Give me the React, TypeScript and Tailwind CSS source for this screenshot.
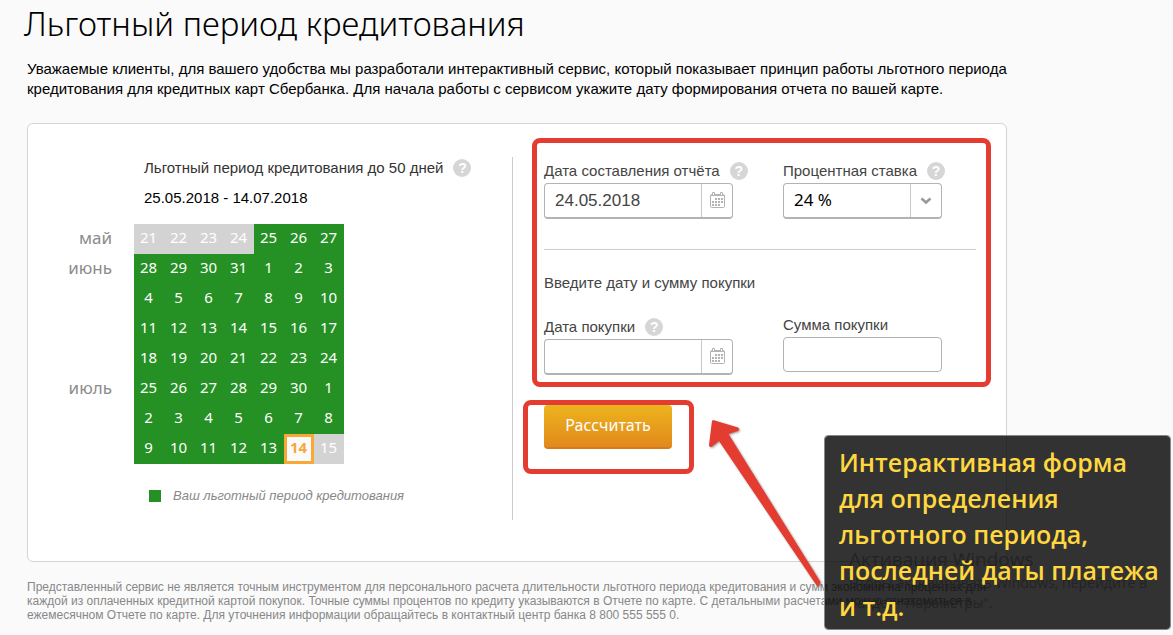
import type { ReactNode } from "react";
import { useState } from "react";
import clsx from "clsx";

type DayState = "off" | "grace" | "due";

interface Week {
  month?: string;
  days: number[];
}

const WEEKS: Week[] = [
  { month: "май", days: [21, 22, 23, 24, 25, 26, 27] },
  { month: "июнь", days: [28, 29, 30, 31, 1, 2, 3] },
  { days: [4, 5, 6, 7, 8, 9, 10] },
  { days: [11, 12, 13, 14, 15, 16, 17] },
  { days: [18, 19, 20, 21, 22, 23, 24] },
  { month: "июль", days: [25, 26, 27, 28, 29, 30, 1] },
  { days: [2, 3, 4, 5, 6, 7, 8] },
  { days: [9, 10, 11, 12, 13, 14, 15] },
];

// the grace period covers cells 4..54, the last one is the payment date
const GRACE_START = 4;
const DUE_CELL = 54;

const dayState = (cell: number): DayState => {
  if (cell === DUE_CELL) {
    return "due";
  }
  return cell < GRACE_START || cell > DUE_CELL ? "off" : "grace";
};

const HelpButton = ({ label }: { label: string }) => (
  <button
    type="button"
    aria-label={label}
    className="flex size-[18px] shrink-0 items-center justify-center rounded-full bg-[#d6d6d6] text-sm leading-none font-bold text-white"
  >
    ?
  </button>
);

const CalendarIcon = () => (
  <svg width="15" height="16" viewBox="0 0 15 16" fill="none" aria-hidden="true">
    <rect x="0.5" y="2.5" width="14" height="13" rx="1" stroke="#b3b3b3" />
    <path d="M1 3.500h13" stroke="#b3b3b3" />
    <path d="M2.5 0.5h2v3h-2zM10.500 0.5h2v3h-2z" fill="#fff" stroke="#b3b3b3" />
    <path d="M5 7h8M2 10h11M2 13h8" stroke="#b3b3b3" strokeWidth="2" strokeDasharray="2 1" />
  </svg>
);

const ChevronIcon = () => (
  <svg width="12" height="8" viewBox="0 0 12 8" fill="none" aria-hidden="true">
    <path d="M1.5 1.5L6 5.5l4.5-4" stroke="#999" strokeWidth="2.5" />
  </svg>
);

interface FieldLabelProps {
  htmlFor: string;
  help: string;
  children: ReactNode;
}

const FieldLabel = ({ htmlFor, help, children }: FieldLabelProps) => (
  <div className="flex h-6 items-center gap-[10px] whitespace-nowrap">
    <label htmlFor={htmlFor}>{children}</label>
    <HelpButton label={help} />
  </div>
);

interface DateFieldProps {
  id: string;
  value: string;
  onChange: (value: string) => void;
}

const DateField = ({ id, value, onChange }: DateFieldProps) => (
  <div className="flex h-9 rounded border border-b-2 border-[#b3b3b3] bg-white">
    <input
      id={id}
      type="text"
      value={value}
      onChange={(event) => onChange(event.target.value)}
      className="min-w-0 flex-1 px-[10px] text-[17px] text-[#444] outline-none"
    />
    <button
      type="button"
      aria-label="Открыть календарь"
      className="flex w-[31px] items-center justify-center border-l border-[#c8c8c8] pb-px"
    >
      <CalendarIcon />
    </button>
  </div>
);

const GraceCalendar = () => (
  <table className="mt-4 border-collapse font-['Noto_Sans','Open_Sans',sans-serif]">
    <tbody>
      {WEEKS.map((week, row) => (
        <tr key={row} className="h-[30px]">
          <th
            scope="row"
            className="w-[106px] p-0 pr-[22px] pb-[2px] text-right text-[17px] leading-5 font-normal text-[#8c8c8c]"
          >
            {week.month}
          </th>
          {week.days.map((day, col) => {
            const state = dayState(row * 7 + col);
            return (
              <td key={col} className="size-[30px] p-0 text-center text-[15px] leading-5">
                <div
                  className={clsx(
                    "border-[3px] pr-px pb-1",
                    state === "off" && "border-[#d3d3d3] bg-[#d3d3d3] text-white",
                    state === "grace" && "border-[#259023] bg-[#259023] text-white",
                    state === "due" && "border-[#f7a836] bg-[#fafafa] font-bold text-[#f7a836]",
                  )}
                >
                  {day}
                </div>
              </td>
            );
          })}
        </tr>
      ))}
    </tbody>
  </table>
);

const GracePeriod = () => (
  <section className="w-[484px] shrink-0 pb-[14px]">
    <div className="flex h-[22px] items-center gap-[10px] pl-[116px]">
      <h2 className="text-[15px] leading-5 text-[#333]">Льготный период кредитования до 50 дней</h2>
      <HelpButton label="О льготном периоде" />
    </div>
    <p className="mt-[9px] pl-[116px] text-[15px] leading-5">25.05.2018 - 14.07.2018</p>
    <GraceCalendar />
    <p className="mt-[22px] flex items-center gap-3 pl-[121px] text-[13px] leading-5 text-[#888] italic">
      <span className="size-3 bg-[#259023]" />
      Ваш льготный период кредитования
    </p>
  </section>
);

const Calculator = () => {
  const [reportDate, setReportDate] = useState("24.05.2018");
  const [purchaseDate, setPurchaseDate] = useState("");
  const [amount, setAmount] = useState("");

  return (
    <form
      className="relative flex-1 border-l border-[#ccc] pt-[2px] pl-[31px] text-[15px] leading-5 text-[#444]"
      onSubmit={(event) => event.preventDefault()}
    >
      <div className="flex items-start gap-[50px]">
        <div className="w-[189px]">
          <FieldLabel htmlFor="report-date" help="О дате отчёта">
            Дата составления отчёта
          </FieldLabel>
          <DateField id="report-date" value={reportDate} onChange={setReportDate} />
        </div>
        <div className="w-[159px]">
          <FieldLabel htmlFor="rate" help="О процентной ставке">
            Процентная ставка
          </FieldLabel>
          <div className="relative">
            <select
              id="rate"
              className="block h-9 w-full appearance-none rounded border border-b-2 border-[#b3b3b3] bg-white px-[10px] pb-[2px] font-['Noto_Sans','Open_Sans',sans-serif] text-[17px] text-black outline-none"
            >
              <option>24 %</option>
            </select>
            <span className="pointer-events-none absolute top-px right-px bottom-[2px] flex w-[31px] items-center justify-center border-l border-[#c8c8c8]">
              <ChevronIcon />
            </span>
          </div>
        </div>
      </div>

      <hr className="mt-[30px] border-[#ccc]" />
      <p className="mt-[23px]">Введите дату и сумму покупки</p>

      <div className="mt-[22px] flex items-start gap-[50px]">
        <div className="w-[189px]">
          <FieldLabel htmlFor="purchase-date" help="О дате покупки">
            Дата покупки
          </FieldLabel>
          <DateField id="purchase-date" value={purchaseDate} onChange={setPurchaseDate} />
        </div>
        <div className="w-[159px]">
          <label htmlFor="amount" className="mb-[2px] block">
            Сумма покупки
          </label>
          <input
            id="amount"
            type="text"
            value={amount}
            onChange={(event) => setAmount(event.target.value)}
            className="block h-[35px] w-full rounded border border-[#b3b3b3] bg-white px-[10px] outline-none"
          />
        </div>
      </div>

      <button
        type="submit"
        className="mt-[30px] h-11 w-32 rounded-sm border-b-2 border-[#d9791c] bg-linear-to-b from-[#ecb41d] to-[#e2891c] pb-[2px] font-['Noto_Sans','Open_Sans',sans-serif] text-base text-white"
      >
        Рассчитать
      </button>

      {/* highlight frames */}
      <div className="pointer-events-none absolute -top-[19px] -right-[15px] left-[19px] h-[249px] rounded-lg border-5 border-[#e53c31]" />
      <div className="pointer-events-none absolute top-[243px] left-[10px] h-[74px] w-[171px] rounded-lg border-5 border-[#e53c31]" />
    </form>
  );
};

const Callout = () => (
  <>
    <div className="absolute top-[545px] left-[849px] font-['Open_Sans','Noto_Sans',sans-serif] text-sm leading-5 whitespace-nowrap text-[#b0b0b0]">
      <p className="text-[19px] leading-7">Активация Windows</p>
      <p>Чтобы активировать Windows, перейдите в</p>
      <p>раздел "Параметры".</p>
    </div>
    <svg
      className="absolute top-[415px] left-[700px] drop-shadow-[1px_1px_1px_rgba(0,0,0,0.4)]"
      width="130"
      height="180"
      viewBox="700 415 130 180"
      aria-hidden="true"
    >
      <path
        d="M713 420L738 427.500Q740 429 738 431L728.500 434L820.500 582Q820 586 817 586L719 441L711.500 447Q709 447.500 709 445L712 421Z"
        fill="#e53c31"
      />
    </svg>
    <p className="absolute top-[435px] left-[824px] h-[195px] w-[347px] rounded border border-[#888] bg-black/80 bg-clip-padding py-2 pl-[14px] font-['Comic_Sans_MS','Open_Sans','Noto_Sans',cursive] text-[25px] leading-9 font-semibold whitespace-nowrap text-[#ffd740]">
      Интерактивная форма
      <br />
      для определения
      <br />
      льготного периода,
      <br />
      последней даты платежа
      <br />
      и т.д.
    </p>
  </>
);

export default function App() {
  return (
    <main className="relative min-h-screen bg-[#fafafa] px-6 pb-3 font-['Liberation_Sans',Arial,sans-serif] text-black">
      <h1 className="font-['Noto_Sans','Open_Sans',sans-serif] text-[33px] leading-[48px] font-light">
        Льготный период кредитования
      </h1>
      <div className="max-w-[983px] pl-[3px]">
        <p className="mt-[11px] text-[15px] leading-5">
          Уважаемые клиенты, для вашего удобства мы разработали интерактивный сервис, который
          показывает принцип работы льготного периода кредитования для кредитных карт Сбербанка. Для
          начала работы с сервисом укажите дату формирования отчета по вашей карте.
        </p>
        <div className="mt-6 flex rounded-md border border-[#d4d4d4] bg-white pt-[33px] pr-[30px] pb-[41px]">
          <GracePeriod />
          <Calculator />
        </div>
        <p className="mt-[18px] text-xs leading-[14px] text-[#888]">
          Представленный сервис не является точным инструментом для персонального расчета
          длительности льготного периода кредитования и сумм экономии на процентах для каждой из
          оплаченных кредитной картой покупок. Точные суммы процентов по кредиту указываются в Отчете
          по карте. С детальными расчетами можно ознакомиться в ежемесячном Отчете по карте. Для
          уточнения информации обращайтесь в контактный центр банка 8 800 555 555 0.
        </p>
      </div>
      <Callout />
    </main>
  );
}
